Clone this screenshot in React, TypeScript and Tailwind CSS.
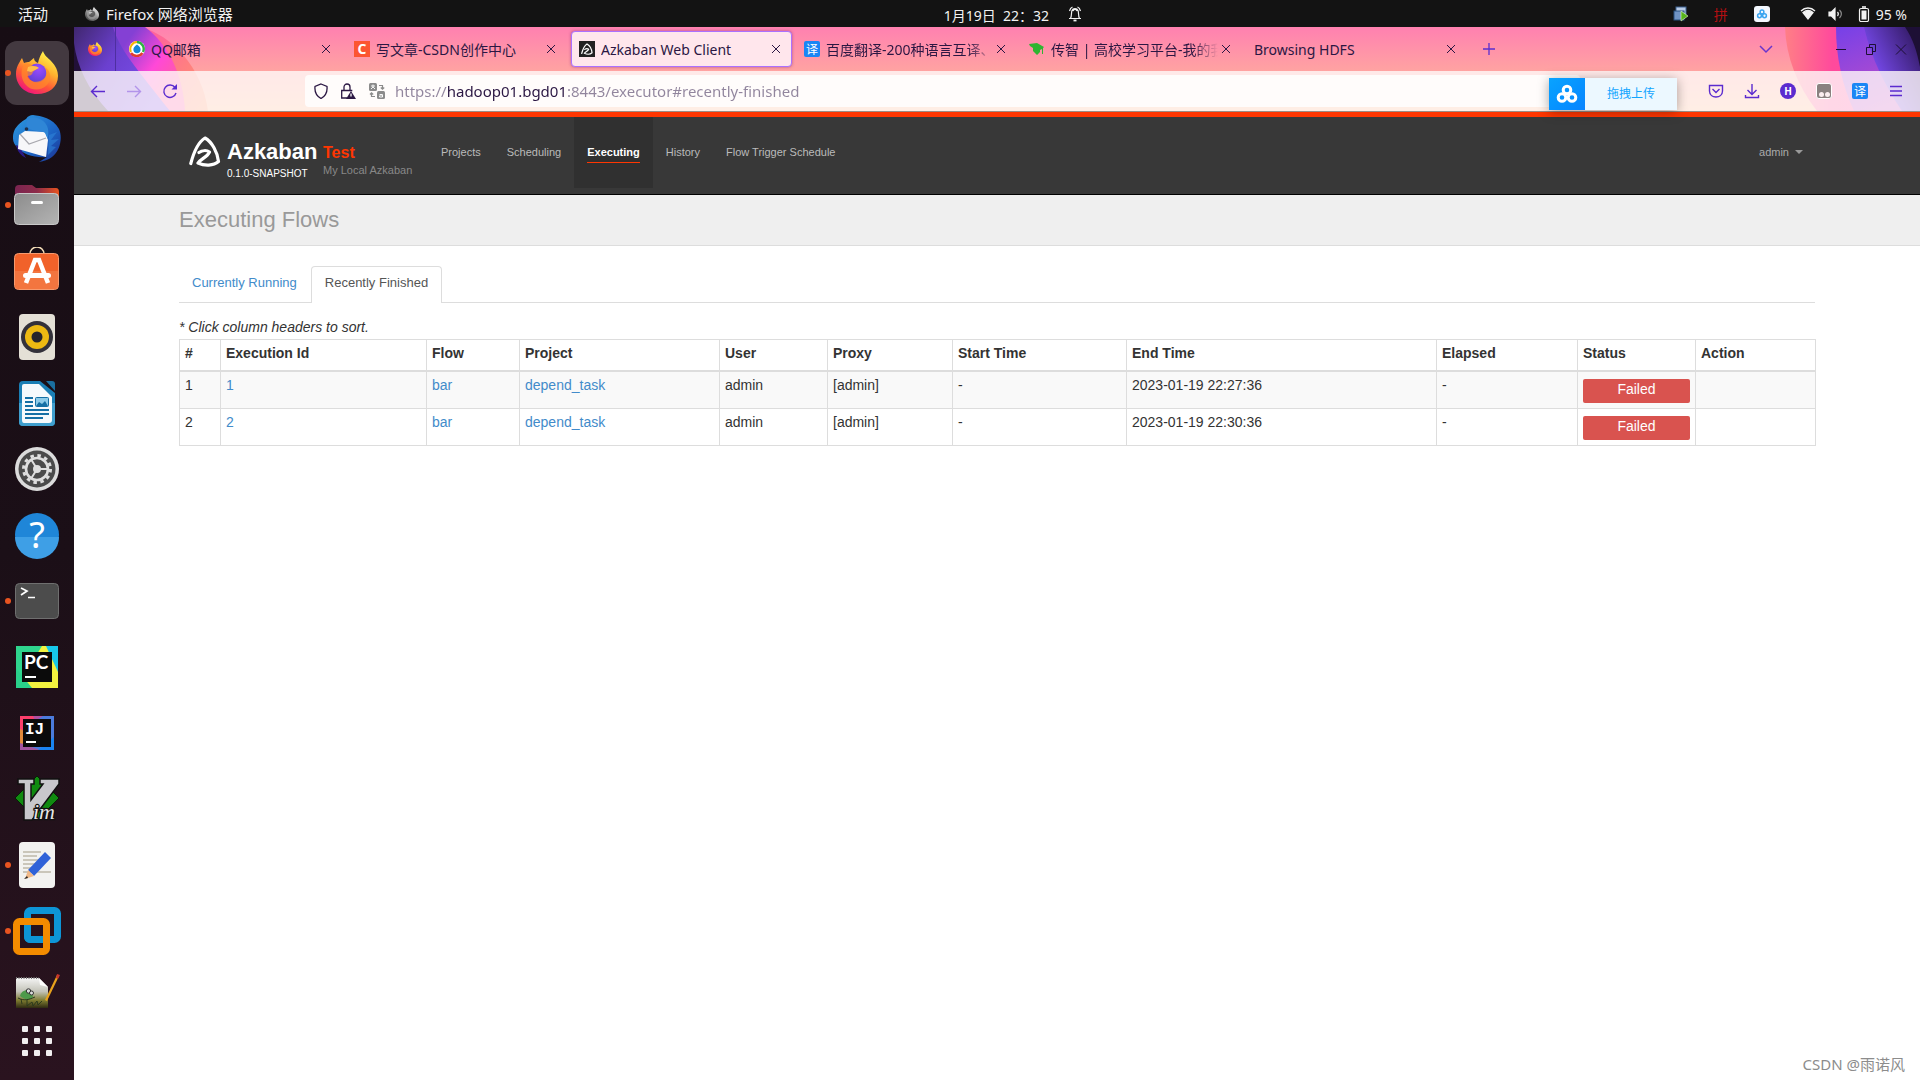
import { ReactNode } from "react";

type TabProps = {
  title: string;
  icon?: ReactNode;
  active?: boolean;
};

type Execution = {
  id: number;
  flow: string;
  project: string;
  user: string;
  proxy: string;
  start: string;
  end: string;
  elapsed: string;
  status: string;
};

const executions: Execution[] = [
  { id: 1, flow: "bar", project: "depend_task", user: "admin", proxy: "[admin]", start: "-", end: "2023-01-19 22:27:36", elapsed: "-", status: "Failed" },
  { id: 2, flow: "bar", project: "depend_task", user: "admin", proxy: "[admin]", start: "-", end: "2023-01-19 22:30:36", elapsed: "-", status: "Failed" },
];

const columns = [
  { name: "#", width: "w-[41px]" },
  { name: "Execution Id", width: "w-[206px]" },
  { name: "Flow", width: "w-[93px]" },
  { name: "Project", width: "w-[200px]" },
  { name: "User", width: "w-[108px]" },
  { name: "Proxy", width: "w-[125px]" },
  { name: "Start Time", width: "w-[174px]" },
  { name: "End Time", width: "w-[310px]" },
  { name: "Elapsed", width: "w-[141px]" },
  { name: "Status", width: "w-[118px]" },
  { name: "Action", width: "w-[120px]" },
];

const menu = ["Projects", "Scheduling", "Executing", "History", "Flow Trigger Schedule"];

/* ---------- small icons ---------- */

const FirefoxLogo = ({ className }: { className: string }) => (
  <svg viewBox="0 0 48 48" className={className}>
    <defs>
      <linearGradient id="fxBody" x1="0.8" y1="0.1" x2="0.3" y2="1">
        <stop offset="0" stopColor="#fff04a" />
        <stop offset="0.35" stopColor="#ffb02e" />
        <stop offset="0.65" stopColor="#ff5a36" />
        <stop offset="1" stopColor="#f0127f" />
      </linearGradient>
      <radialGradient id="fxCore" cx="0.6" cy="0.3" r="0.8">
        <stop offset="0" stopColor="#9a4bff" />
        <stop offset="1" stopColor="#5a3fd0" />
      </radialGradient>
    </defs>
    <path d="M30 2c1 4 5 7 8 10 5 5 7 10 7 15 0 11-9 18-21 18S3 36 3 25c0-7 3-11 6-16l2 5c2-1 4-1 5-1 2-1 3-3 5-4 0 3 2 4 4 5 1-5 3-9 5-12z" fill="url(#fxBody)" />
    <circle cx="24" cy="24" r="9.5" fill="url(#fxCore)" />
    <path d="M11 15c4-1 7 0 9 2 3 0 5 1 5 2-1 2-4 2-5 4-1 3-3 4-6 4 2 5 8 7 13 5 6-2 8-8 5-14 6 4 7 12 2 18-6 6-16 6-21 0-5-5-6-14-2-21z" fill="#ff8a2a" opacity="0.7" />
    <path d="M15 18c4-2 9-1 11 1-3 1-5 3-8 4l-4-1z" fill="#ffbd4a" />
  </svg>
);

const CloseIcon = () => (
  <svg viewBox="0 0 16 16" className="size-4" fill="none" stroke="#2b1743" strokeWidth="1">
    <path d="M4 4l8 8M12 4l-8 8" />
  </svg>
);

const QQMailIcon = () => (
  <svg viewBox="0 0 16 16" className="size-4">
    <circle cx="8" cy="8" r="8" fill="#fff" />
    <path d="M2 11A7 7 0 0 1 8 1" fill="none" stroke="#f7b500" strokeWidth="2" />
    <path d="M8 1a7 7 0 0 1 6 10" fill="none" stroke="#2fb344" strokeWidth="2.4" />
    <path d="M2 12a7 7 0 0 0 11.500 0" fill="none" stroke="#e33b2e" strokeWidth="2.4" />
    <path d="M8 3.500c3 2 4 4 3.500 6a3.600 3.600 0 0 1-7 0C4 7.500 5 5.500 8 3.500z" fill="#1486d8" />
  </svg>
);

const CsdnIcon = () => (
  <span className="flex size-4 items-center justify-center bg-[#fc5531] font-['Open_Sans',sans-serif] text-sm leading-4 font-bold text-white">C</span>
);

const TranslateBadge = () => (
  <span className="flex size-4 items-center justify-center rounded-xs bg-[#1a86f5] font-['Noto_Sans_CJK_SC',sans-serif] text-xs leading-4 text-white">译</span>
);

const SchoolIcon = () => (
  <svg viewBox="0 0 16 16" className="size-4" fill="#2fb531">
    <path d="M0 3l8-1 7 4-1 1v6h-1V8l-2 1v2l-3 3-4-4V7L1 5z" />
  </svg>
);

const AzkabanMark = ({ className }: { className: string }) => (
  <svg viewBox="0 0 32 31" className={className} fill="none" stroke="#fff" strokeWidth="3.2" strokeLinecap="round" strokeLinejoin="round">
    <path d="M1.800 27.500C4.500 17 9.500 6 16 2c7 4 12.500 14 13.500 23.500-5 4.500-14 4.500-20.500 1.500 2-3.500 9-5.500 11.500-11-3-2-7.500-1.500-10.500 0.500" />
  </svg>
);

const AzkabanFavicon = () => (
  <span className="flex size-4 items-center justify-center bg-[#222]">
    <AzkabanMark className="h-3 w-3" />
  </span>
);

const CloudIcon = ({ className, color }: { className: string; color: string }) => (
  <svg viewBox="0 0 24 20" className={className} fill="none" stroke={color} strokeWidth="3">
    <circle cx="12" cy="6" r="3.800" />
    <circle cx="7" cy="13.500" r="3.800" />
    <circle cx="17" cy="13.500" r="3.800" />
  </svg>
);

/* ---------- dock icons, 48x48 ---------- */

const ThunderbirdLogo = () => (
  <svg viewBox="0 0 48 48" className="size-12">
    <defs>
      <linearGradient id="tb" x1="0" y1="0" x2="1" y2="1">
        <stop offset="0" stopColor="#2d9be0" />
        <stop offset="0.6" stopColor="#1c63c4" />
        <stop offset="1" stopColor="#1d2f8e" />
      </linearGradient>
    </defs>
    <path d="M20 0c8 1 20 3 26 14 4 9 1 22-7 28-4 3-8 4-13 5l8-5C22 43 10 40 4 32-1 28-1 20 2 14 6 8 11 5 13 4c2-3 4-4 7-4z" fill="url(#tb)" />
    <path d="M3 30c1 6 5 11 10 13L6 31z" fill="#2a1a86" />
    <path d="M12 16l20 1 3 8-2 17L5 34 6 20z" fill="#f7f7f9" />
    <path d="M7 19l9 10 17-6" fill="none" stroke="#a8a8ae" strokeWidth="1.200" />
    <path d="M16 3c8-2 17 2 19 11 1 6-1 8 1 12l-4-8c-4-3-12-1-17-5-3-3-2-7 1-10z" fill="#2f86d6" />
    <path d="M36 20l8-3-6 8 8-1-8 7 5 1-8 8z" fill="#2f83d8" opacity="0.6" />
    <circle cx="13.500" cy="14" r="1.800" fill="#20304a" />
  </svg>
);

const FilesLogo = () => (
  <svg viewBox="0 0 48 48" className="size-12">
    <defs>
      <linearGradient id="flBack" x1="0" x2="1">
        <stop offset="0" stopColor="#7a2450" />
        <stop offset="0.5" stopColor="#8d2c4a" />
        <stop offset="1" stopColor="#e9541f" />
      </linearGradient>
      <linearGradient id="flFront" x1="0" y1="0" x2="1" y2="1">
        <stop offset="0" stopColor="#8c8c8c" />
        <stop offset="1" stopColor="#b4b4b4" />
      </linearGradient>
    </defs>
    <path d="M2 8q0-4 4-4h13l4 3h20q3 0 3 4v14H2z" fill="url(#flBack)" />
    <rect x="1.500" y="12.500" width="44" height="31" rx="4" fill="url(#flFront)" stroke="#c9c9c9" />
    <rect x="18" y="20" width="12" height="3" rx="1.500" fill="#fff" />
  </svg>
);

const SoftwareLogo = () => (
  <svg viewBox="0 0 48 48" className="size-12">
    <path d="M17 9V7a7 7 0 0 1 14 0v2" fill="none" stroke="#f2dcb8" strokeWidth="1.600" />
    <rect x="1.500" y="6.500" width="44" height="36" rx="4" fill="#f1622a" stroke="#f79a6e" />
    <path d="M2 24h43v14q0 4-4 4H6q-4 0-4-4z" fill="#f3753f" />
    <path d="M13 36L22 13h4l9 23" fill="none" stroke="#fff" strokeWidth="4.500" />
    <rect x="10" y="26" width="28" height="5" rx="2.500" fill="#fff" />
  </svg>
);

const RhythmboxLogo = () => (
  <svg viewBox="0 0 48 48" className="size-12">
    <rect x="6" y="1" width="36" height="46" rx="4" fill="#e4e0d6" />
    <circle cx="24" cy="24" r="16" fill="#33313a" />
    <circle cx="24" cy="24" r="12" fill="#edb912" />
    <circle cx="24" cy="24" r="5.500" fill="#26252b" />
  </svg>
);

const WriterLogo = () => (
  <svg viewBox="0 0 48 48" className="size-12">
    <path d="M10 2h17l15 12v29q0 4-4 4H10q-4 0-4-4V6q0-4 4-4z" fill="#1a7fb5" />
    <path d="M6 24h36v19q0 4-4 4H10q-4 0-4-4z" fill="#3f9fce" />
    <path d="M33 2h6q3 0 3 3v7z" fill="#1a6f9f" />
    <path d="M11 5h15l13 13v23q0 3-3 3H11q-2 0-2-3V7q0-2 2-2z" fill="#f5fafc" />
    <path d="M12 19h8M12 23h8M12 27h8M12 31h24M12 35h24M12 39h18" stroke="#1470a5" strokeWidth="2" />
    <rect x="22.500" y="18.500" width="13" height="9" rx="1" fill="#8ccbe8" stroke="#1470a5" />
    <path d="M23 27l3-4 3 2 3-3 3 5z" fill="#1470a5" />
  </svg>
);

const SettingsLogo = () => (
  <svg viewBox="0 0 48 48" className="size-12">
    <circle cx="24" cy="24" r="22" fill="#dcdcdc" />
    <circle cx="24" cy="24" r="18.500" fill="#4b4b4b" />
    <circle cx="24" cy="24" r="13.500" fill="none" stroke="#dedede" strokeWidth="3" strokeDasharray="3.500 3.568" />
    <circle cx="24" cy="24" r="11" fill="none" stroke="#dedede" strokeWidth="2.600" />
    <circle cx="24" cy="24" r="4" fill="#dedede" />
    <path d="M24 24h10M24 24l-5.500-9M24 24l-5.500 9" stroke="#dedede" strokeWidth="2" />
  </svg>
);

const HelpLogo = () => (
  <svg viewBox="0 0 48 48" className="size-12">
    <circle cx="24" cy="24" r="22" fill="#1f86d8" />
    <path d="M2 26h44a22 22 0 0 1-44 0z" fill="#3e9fe6" />
    <text x="24" y="37" textAnchor="middle" fontSize="36" fill="#fff" fontFamily="Noto Sans, sans-serif">?</text>
  </svg>
);

const TerminalLogo = () => (
  <svg viewBox="0 0 48 48" className="size-12">
    <rect x="2.500" y="6.500" width="43" height="35" rx="4" fill="#4c4c4c" stroke="#6f6f6f" />
    <path d="M8 11l6 3-6 4M15 20.500h7" fill="none" stroke="#fff" strokeWidth="1.700" />
  </svg>
);

const PyCharmLogo = () => (
  <svg viewBox="0 0 48 48" className="size-12">
    <rect x="3" y="3" width="42" height="42" fill="#2fd58e" />
    <path d="M31 3h14v28z" fill="#17c8ea" />
    <path d="M3 45l26-42h4l12 26v16z" fill="#f3f23f" />
    <path d="M3 45V25l16 20z" fill="#29d08a" />
    <rect x="9" y="9" width="30" height="30" fill="#0b0b0b" />
    <text x="11" y="26" fontSize="19" fontWeight="700" fill="#fff" fontFamily="Lato, sans-serif">PC</text>
    <rect x="12" y="33" width="11" height="2" fill="#fff" />
  </svg>
);

const IntellijLogo = () => (
  <svg viewBox="0 0 48 48" className="size-12">
    <rect x="7" y="7" width="34" height="34" fill="#4b7bdc" />
    <path d="M7 7h20L7 24z" fill="#fb3f6b" />
    <path d="M7 20l6 3v9l-6 5z" fill="#e08a3c" />
    <path d="M7 34l20 7H7z" fill="#a2559f" />
    <path d="M25 41h16V28z" fill="#1a84f0" />
    <path d="M20 7h10l-8 5z" fill="#b04fa0" />
    <rect x="10" y="10" width="28" height="28" fill="#0b0b0b" />
    <text x="12" y="25" fontSize="16" fontWeight="700" fill="#fff" fontFamily="Liberation Mono, monospace">IJ</text>
    <rect x="13" y="32" width="10" height="2" fill="#fff" />
  </svg>
);

const VimLogo = () => (
  <svg viewBox="0 0 48 48" className="size-12">
    <path d="M24 1l22 22-22 22L2 23z" fill="#108a10" stroke="#051f05" />
    <path d="M5 4h16v5h-3v16L30 9h-3V4h19v5L19 45h-8V9H5z" fill="#c8c8cc" stroke="#111" strokeWidth="1.500" />
    <text
      x="20"
      y="44"
      fontSize="22"
      fontStyle="italic"
      fill="#e6e6e8"
      stroke="#111"
      strokeWidth="2.500"
      paintOrder="stroke"
      fontFamily="Liberation Serif, serif"
    >
      im
    </text>
  </svg>
);

const TextEditorLogo = () => (
  <svg viewBox="0 0 48 48" className="size-12">
    <rect x="6" y="1" width="36" height="46" rx="4" fill="#f2f2f0" />
    <path d="M10 11h18M10 15h14M10 19h18M10 23h16M10 27h10M10 31h28" stroke="#bdb8a8" strokeWidth="1.600" />
    <path d="M32 11l6 6-17 18-6-6z" fill="#2f62d8" />
    <path d="M15 29l6 6-9 3z" fill="#f0b887" />
    <path d="M11 38l3-3 1 2z" fill="#222" />
  </svg>
);

const VmwareLogo = () => (
  <svg viewBox="0 0 48 48" className="size-12" fill="none" strokeWidth="7">
    <rect x="14.500" y="3.500" width="30" height="29" rx="3" stroke="#0d95d6" />
    <rect x="3.500" y="14.500" width="30" height="30" rx="3" stroke="#f38b00" />
    <path d="M14.500 20v9.500q0 3 3 3H28" stroke="#0d95d6" />
    <path d="M30 14.500H14" stroke="#f38b00" />
  </svg>
);

const NotepadLogo = () => (
  <svg viewBox="0 0 48 48" className="size-12">
    <defs>
      <linearGradient id="np" x1="0" y1="0" x2="0" y2="1">
        <stop offset="0" stopColor="#f4f4f4" />
        <stop offset="0.45" stopColor="#c3c3b8" />
        <stop offset="0.75" stopColor="#7d7b30" />
        <stop offset="1" stopColor="#2e2a12" />
      </linearGradient>
    </defs>
    <path d="M3 5h23l9 9v21H3z" fill="url(#np)" />
    <path d="M3 5h23" stroke="#777" strokeWidth="2" strokeDasharray="1 1.500" />
    <path d="M26 5l1 7 8 2z" fill="#fff" />
    <path d="M7 23c1-6 9-8 12-4l1 5c-4 4-8 3-13-1z" fill="#4e9a4a" />
    <circle cx="15.500" cy="18" r="2.200" fill="#ddd" stroke="#333" />
    <circle cx="18.500" cy="20" r="2" fill="#ddd" stroke="#333" />
    <path d="M5 25c6 3 10 2 17-1M8 26l1 5M14 27v6l5-4 1 4 4-5 1 4 4-4" stroke="#2c3a1c" fill="none" />
    <path d="M44 2l2 1-12 25-2-1z" fill="#e8a21c" />
    <path d="M44 1l3 1-2 4-2-1z" fill="#c8352a" />
  </svg>
);

const dockApps = [
  { name: "Firefox", icon: <FirefoxLogo className="size-12" />, running: true, active: true },
  { name: "Thunderbird", icon: <ThunderbirdLogo /> },
  { name: "Files", icon: <FilesLogo />, running: true },
  { name: "Ubuntu Software", icon: <SoftwareLogo /> },
  { name: "Rhythmbox", icon: <RhythmboxLogo /> },
  { name: "LibreOffice Writer", icon: <WriterLogo /> },
  { name: "Settings", icon: <SettingsLogo /> },
  { name: "Help", icon: <HelpLogo /> },
  { name: "Terminal", icon: <TerminalLogo />, running: true },
  { name: "PyCharm", icon: <PyCharmLogo /> },
  { name: "IntelliJ IDEA", icon: <IntellijLogo /> },
  { name: "Vim", icon: <VimLogo /> },
  { name: "Text Editor", icon: <TextEditorLogo />, running: true },
  { name: "VMware", icon: <VmwareLogo />, running: true },
];

const Dock = () => (
  <aside className="flex w-[74px] flex-none flex-col bg-linear-to-b from-[#170d14] via-[#1b0f17] to-[#2a131f] pt-[13px]">
    {dockApps.map((app) => (
      <div key={app.name} className="flex h-[66px] items-center">
        <span className="flex w-[5px] flex-none justify-end">
          {app.running && !app.active && <span className="-mr-1.5 size-1.5 flex-none rounded-full bg-[#e95420]" />}
        </span>
        <button
          aria-label={app.name}
          className={
            app.active
              ? "relative flex size-16 items-center justify-center rounded-xl bg-[#433940]"
              : "flex size-16 items-center justify-center"
          }
        >
          {app.active && <span className="absolute left-0 size-1.5 rounded-full bg-[#e95420]" />}
          {app.icon}
        </button>
      </div>
    ))}
    <button aria-label="Notepadqq" className="flex h-[46px] items-start justify-center overflow-hidden pt-[9px]">
      <NotepadLogo />
    </button>
    <button aria-label="Show Applications" className="grid h-[62px] grid-cols-[repeat(3,6px)] content-center justify-center gap-1.5">
      {Array.from({ length: 9 }).map((_, i) => (
        <span key={i} className="size-1.5 rounded-[1px] bg-[#f1eff0]" />
      ))}
    </button>
  </aside>
);

const TopBar = () => (
  <header className="flex h-[27px] flex-none items-center bg-[#131313] text-sm leading-5 text-[#f2f2f2]">
    <div className="flex w-[49%] items-center pl-[18px] text-[15px]">
      <button className="w-[66px] text-left">活动</button>
      <button className="flex items-center gap-1.5">
        <FirefoxLogo className="size-4 grayscale" />
        Firefox 网络浏览器
      </button>
    </div>
    <button className="flex items-center gap-[18px] pl-[3px]">
      <span className="pt-1 whitespace-pre">1月19日  22：32</span>
      <svg viewBox="0 0 16 16" className="size-4" fill="none" stroke="#f2f2f2" strokeWidth="1.200">
        <path d="M2 12.500h12M3.500 12.500C5 10 4 7 5 4.500 6 2 10 2 11 4.500c1 2.500 0 5.500 1.500 8M6 5C7 3 9 3 10 5M2.500 5C3 3 4 1.500 5.500 1M13.500 5C13 3 12 1.500 10.500 1" />
        <path d="M6.500 14.500h3" strokeWidth="1.800" />
      </svg>
    </button>
    <div className="ml-auto flex items-center pr-[13px]">
      <svg viewBox="0 0 16 16" className="mr-[25px] size-4">
        <rect x="3" y="1" width="10" height="8" fill="#b8cbe6" stroke="#3d618f" />
        <rect x="1" y="5" width="10" height="9" fill="#6f93c4" stroke="#29507f" />
        <path d="M8 5l7 5-7 5z" fill="#58b41c" stroke="#dff3cc" strokeWidth="0.600" />
      </svg>
      <span className="mr-6 w-4 font-['Noto_Sans_CJK_SC',sans-serif] text-sm text-[#b30f12]">拼</span>
      <span className="mr-[30px] flex size-4 items-center justify-center rounded-[3px] bg-[#f4f8ff]">
        <CloudIcon className="h-3 w-3" color="#3aa4f0" />
      </span>
      <svg viewBox="0 0 16 16" className="mr-3 size-4" fill="none" stroke="#f2f2f2" strokeWidth="1.300">
        <path d="M1 5c4-4 10-4 14 0" />
        <path d="M3 6.500c3-2.500 7-2.500 10 0L8 13z" fill="#f2f2f2" />
      </svg>
      <svg viewBox="0 0 16 16" className="mr-3 size-4" fill="none" stroke="#f2f2f2" strokeWidth="1.200">
        <path d="M1 6h2.500L7 2.500v11L3.500 10H1z" fill="#f2f2f2" />
        <path d="M9.500 6c1 1.200 1 2.800 0 4" />
        <path d="M11.500 4c2.500 2.400 2.500 5.600 0 8" stroke="#8a8a8a" />
      </svg>
      <svg viewBox="0 0 16 16" className="mr-1 size-4" fill="none" stroke="#f2f2f2" strokeWidth="1.200">
        <rect x="3.500" y="2.500" width="9" height="13" rx="1.500" />
        <path d="M6 1h4" strokeWidth="1.600" />
        <rect x="5.500" y="4.500" width="5" height="9" fill="#f2f2f2" stroke="none" />
      </svg>
      <span className="pt-0.5">95 %</span>
    </div>
  </header>
);

const BrowserTab = ({ title, icon, active }: TabProps) => (
  <div
    className={
      active
        ? "mx-0.5 flex h-9 w-[221px] flex-none items-center rounded-sm border border-[#ab71ff] bg-[#ffe6ec] px-[7px] shadow-[0_0_3px_rgba(120,40,120,0.6)]"
        : "mx-0.5 flex h-9 w-[221px] flex-none items-center px-2"
    }
  >
    <button className="flex min-w-0 flex-1 items-center gap-1.5 text-left">
      {icon && <span className="flex-none">{icon}</span>}
      <span
        className={
          title.length > 15 && title.includes("-")
            ? "flex-1 overflow-hidden mask-r-from-85% pt-px whitespace-nowrap"
            : "flex-1 overflow-hidden pt-px whitespace-nowrap"
        }
      >
        {title}
      </span>
    </button>
    <button aria-label={"Close " + title} className="flex-none">
      <CloseIcon />
    </button>
  </div>
);

const ThemeArt = () => (
  <>
    <svg viewBox="0 0 140 84" className="absolute top-0 left-0 h-[84px] w-[140px]">
      <defs>
        <linearGradient id="artL1" x1="0" y1="0" x2="1" y2="0.6">
          <stop offset="0" stopColor="#40276f" />
          <stop offset="0.45" stopColor="#6b40cf" />
          <stop offset="1" stopColor="#7c50ee" />
        </linearGradient>
        <linearGradient id="artL2" x1="0.2" y1="0.2" x2="0.8" y2="0.7">
          <stop offset="0" stopColor="#8440d4" />
          <stop offset="0.6" stopColor="#ff48d8" />
          <stop offset="1" stopColor="#ff5aa8" />
        </linearGradient>
        <linearGradient id="artL3" x1="0" y1="0" x2="1" y2="1">
          <stop offset="0" stopColor="#ff5aa5" />
          <stop offset="1" stopColor="#ff9a66" />
        </linearGradient>
      </defs>
      <path d="M66 0C98 8 128 40 134 84H90z" fill="url(#artL3)" />
      <path d="M36 0h35c24 18 38 48 40 84H80z" fill="url(#artL2)" />
      <path d="M0 0h39c6 22 24 42 57 84H0z" fill="url(#artL1)" />
      <path d="M0 16c3 24 14 46 34 68H0z" fill="#221038" />
    </svg>
    <svg viewBox="0 0 160 84" className="absolute top-0 right-0 h-[84px] w-[160px]">
      <defs>
        <linearGradient id="artR1" x1="0" y1="0" x2="0.7" y2="0">
          <stop offset="0" stopColor="#ff7f86" />
          <stop offset="0.5" stopColor="#ff4a9c" />
          <stop offset="1" stopColor="#ff48a2" />
        </linearGradient>
        <linearGradient id="artR2" x1="0" y1="0" x2="0.4" y2="1">
          <stop offset="0" stopColor="#7540e8" />
          <stop offset="1" stopColor="#c04fc8" />
        </linearGradient>
        <linearGradient id="artR3" x1="1" y1="0" x2="0.2" y2="0.6">
          <stop offset="0" stopColor="#2a1452" />
          <stop offset="1" stopColor="#7a4cf2" />
        </linearGradient>
      </defs>
      <path d="M25 0c1 30 12 58 32 84h103V0z" fill="url(#artR1)" />
      <path d="M76 0c0 30 6 58 18 84h66V0z" fill="url(#artR2)" />
      <path d="M104 0c8 34 22 60 38 84h18V0z" fill="url(#artR3)" />
      <path d="M145 0c8 12 12 24 15 40V0z" fill="#1d0f35" />
    </svg>
  </>
);

const BrowserChrome = () => (
  <div className="relative flex-none bg-linear-to-b from-[#ff80b0] to-[#ffc090] text-sm leading-5 text-[#2b1743]">
    <ThemeArt />
    <div className="relative flex h-11 items-center">
      <button aria-label="Firefox View" className="mr-[3px] flex h-full w-[42px] items-center justify-center border-r border-[#4e2fa0]">
        <FirefoxLogo className="size-4" />
      </button>
      <BrowserTab title="QQ邮箱" icon={<QQMailIcon />} />
      <BrowserTab title="写文章-CSDN创作中心" icon={<CsdnIcon />} />
      <BrowserTab title="Azkaban Web Client" icon={<AzkabanFavicon />} active />
      <BrowserTab title="百度翻译-200种语言互译、沟通" icon={<TranslateBadge />} />
      <BrowserTab title="传智 | 高校学习平台-我的我的" icon={<SchoolIcon />} />
      <BrowserTab title="Browsing HDFS" />
      <button aria-label="New tab" className="ml-3">
        <svg viewBox="0 0 16 16" className="size-4" stroke="#5b2fd0" strokeWidth="1.300">
          <path d="M8 2v12M2 8h12" />
        </svg>
      </button>
      <div className="ml-auto flex items-center pr-[11px]">
        <button aria-label="List tabs" className="mr-[59px]">
          <svg viewBox="0 0 16 16" className="size-4" fill="none" stroke="#6a35cc" strokeWidth="1.500">
            <path d="M2 5l6 6 6-6" />
          </svg>
        </button>
        <button aria-label="Minimize" className="mr-3.5">
          <svg viewBox="0 0 16 16" className="size-4" stroke="#1d0f35"><path d="M3 8.500h10" /></svg>
        </button>
        <button aria-label="Restore" className="mr-3.5">
          <svg viewBox="0 0 16 16" className="size-4" fill="none" stroke="#1d0f35"><path d="M3.500 6.500h6v7h-6zM6.500 6V3.500h6v7h-3" /></svg>
        </button>
        <button aria-label="Close window">
          <svg viewBox="0 0 16 16" className="size-4" stroke="#1d0f35"><path d="M3 3.500l10 10M13 3.500l-10 10" /></svg>
        </button>
      </div>
    </div>

    <div className="relative flex h-10 items-center bg-[#fffafa]/80 pr-4 pl-4">
      <button aria-label="Back" className="mr-5">
        <svg viewBox="0 0 16 16" className="size-4" fill="none" stroke="#5b2bcf" strokeWidth="1.400"><path d="M15 8.500H1.500M7 3L1.500 8.500 7 14" /></svg>
      </button>
      <button aria-label="Forward" className="mr-5">
        <svg viewBox="0 0 16 16" className="size-4" fill="none" stroke="#b294ea" strokeWidth="1.400"><path d="M1 8.500h13.500M9 3l5.500 5.500L9 14" /></svg>
      </button>
      <button aria-label="Reload">
        <svg viewBox="0 0 16 16" className="size-4" fill="none" stroke="#5b2bcf" strokeWidth="1.400">
          <path d="M13 4.500A6.200 6.200 0 1 0 14 10" />
          <path d="M15 1v5.500H9.500z" fill="#5b2bcf" stroke="none" />
        </svg>
      </button>
      <div className="ml-[127px] flex h-8 flex-1 items-center rounded-sm bg-[#fffcfb] pl-2">
        <svg viewBox="0 0 16 16" className="mr-[11px] size-4" fill="none" stroke="#2b1743" strokeWidth="1.300">
          <path d="M8 1l6 2.500c.5 5-1.500 9.500-6 12-4.500-2.500-6.500-7-6-12z" />
        </svg>
        <svg viewBox="0 0 16 16" className="mr-[13px] size-4" fill="none" stroke="#2b1743" strokeWidth="1.300">
          <path d="M7 15H1.700V7.500h10.600M4 7.500V4a3 3 0 0 1 6 0v3.500" />
          <path d="M11 8l5 8H6z" fill="#2b1743" stroke="none" />
          <path d="M11 10.500v3" stroke="#fff" />
        </svg>
        <svg viewBox="0 0 16 16" className="mr-2.5 size-4" fill="none" stroke="#8b8b8b" strokeWidth="1.200">
          <rect x="0" y="0" width="8" height="8" rx="1.500" fill="#8b8b8b" stroke="none" />
          <rect x="8" y="8" width="8" height="8" rx="1.500" fill="#8b8b8b" stroke="none" />
          <path d="M2 3h4M4 1.500V4L2 6M4 4l2 2M10.500 14c0-3 3-3 3 0M10.500 14h3v-2.500h-3" stroke="#fff" strokeWidth="0.900" />
          <path d="M10 2.500h3.500V6M11.800 4.500l1.700 1.700 1.700-1.700M2.500 10v3.500H6M1 11.500l1.500-1.700 1.700 1.700" />
        </svg>
        <input
          type="text"
          aria-label="Address"
          defaultValue="https://hadoop01.bgd01:8443/executor#recently-finished"
          className="min-w-0 flex-1 bg-[linear-gradient(90deg,#91859d_52px,#2b1743_52px,#2b1743_172px,#91859d_172px)] bg-clip-text text-[15px] text-transparent outline-none"
        />
      </div>
      <div className="ml-[128px] flex items-center gap-5">
        <button aria-label="Save to Pocket">
          <svg viewBox="0 0 16 16" className="size-4" fill="none" stroke="#5b2bcf" strokeWidth="1.400">
            <path d="M1.500 2.500h13V8c0 8-13 8-13 0z" />
            <path d="M4.500 6L8 9.500 11.500 6" />
          </svg>
        </button>
        <button aria-label="Downloads">
          <svg viewBox="0 0 16 16" className="size-4" fill="none" stroke="#5b2bcf" strokeWidth="1.400">
            <path d="M8 1v10M3.500 7L8 11.500 12.500 7M1.500 12v2.500h13V12" />
          </svg>
        </button>
        <button aria-label="Account" className="size-4 rounded-full bg-[#5b2bcf] text-[10px] leading-4 font-bold text-white">H</button>
        <button aria-label="Tampermonkey" className="flex size-4 items-end justify-center gap-px rounded-[3px] border border-white bg-[#8a8180] pb-px">
          <span className="size-[5px] rounded-full bg-[#fbeef0]" />
          <span className="size-[5px] rounded-full bg-[#fbeef0]" />
        </button>
        <button aria-label="Translate"><TranslateBadge /></button>
        <button aria-label="Menu">
          <svg viewBox="0 0 16 16" className="size-4" stroke="#5b2bcf" strokeWidth="1.400"><path d="M2 3.500h12M2 8h12M2 12.500h12" /></svg>
        </button>
      </div>
      {/* upload drop target floats over the toolbar */}
      <button className="absolute top-[7px] right-[243px] z-10 flex h-8 w-32 items-stretch bg-[#ecf8ff] text-xs leading-8 text-[#12a5ff] shadow-[0_2px_12px_rgba(0,0,0,0.35)]">
        <span className="flex w-9 items-center justify-center bg-linear-to-br from-[#0aa3ff] to-[#0a84ff]">
          <CloudIcon className="h-5 w-6" color="#fff" />
        </span>
        <span className="flex-1">拖拽上传</span>
      </button>
    </div>
    <div className="relative h-px bg-[#9a8c86]" />
  </div>
);

const AzkabanHeader = () => (
  <div className="flex h-[83px] flex-none items-start border-t-[5px] border-b border-t-[#ff3601] border-b-black bg-[#383838] px-[105px] text-[11px] leading-[14px]">
    <a href="#" className="flex w-[249px] items-start pl-[10px] text-white">
      <AzkabanMark className="mt-[19px] h-[31px] w-8" />
      <span className="mt-[23px] ml-[6px] w-24">
        <span className="block text-[22px] leading-6 font-bold">Azkaban</span>
        <span className="mt-[3px] block text-[10px]">0.1.0-SNAPSHOT</span>
      </span>
      <span className="mt-[26px] whitespace-nowrap">
        <span className="block text-base leading-5 font-bold text-[#ff3601]">Test</span>
        <span className="block text-[#888]">My Local Azkaban</span>
      </span>
    </a>
    <nav className="flex">
      {menu.map((item) => (
        <a
          key={item}
          href="#"
          className={
            item === "Executing"
              ? "h-[71px] bg-[#303030] px-[13px] pt-7 font-bold text-white"
              : "h-[71px] px-[13px] pt-7 text-[#bbb]"
          }
        >
          <span className={item === "Executing" ? "block border-b border-[#ff3601] pb-[3px]" : "block"}>{item}</span>
        </a>
      ))}
    </nav>
    <button className="mt-7 ml-auto flex items-center gap-1.5 pr-3 text-[#aaa]">
      admin
      <span className="border-x-4 border-t-4 border-x-transparent border-t-[#999]" />
    </button>
  </div>
);

const ExecutionTable = () => (
  <table className="w-full table-fixed border-collapse border border-[#ddd] text-left text-sm leading-5 text-[#333]">
    <thead>
      <tr>
        {columns.map((col) => (
          <th key={col.name} className={`${col.width} border border-b-2 border-[#ddd] px-[5px] pt-[3px] pb-[7px] font-bold`}>
            {col.name}
          </th>
        ))}
      </tr>
    </thead>
    <tbody className="[&_td]:border [&_td]:border-[#ddd] [&_td]:px-[5px] [&_td]:pt-[3px] [&_td]:align-top">
      {executions.map((row, i) => (
        <tr key={row.id} className="odd:bg-[#f9f9f9]">
          <td>{i + 1}</td>
          <td><a href="#" className="text-[#428bca]">{row.id}</a></td>
          <td><a href="#" className="text-[#428bca]">{row.flow}</a></td>
          <td><a href="#" className="text-[#428bca]">{row.project}</a></td>
          <td>{row.user}</td>
          <td>{row.proxy}</td>
          <td>{row.start}</td>
          <td>{row.end}</td>
          <td>{row.elapsed}</td>
          <td>
            <div className="mt-1 mb-[5px] h-6 rounded-xs bg-[#d9534f] text-center text-white">{row.status}</div>
          </td>
          <td></td>
        </tr>
      ))}
    </tbody>
  </table>
);

const App = () => {
  return (
    <div className="flex min-h-screen flex-col bg-white font-['Noto_Sans','Noto_Sans_CJK_SC',sans-serif]">
      <TopBar />
      <div className="flex flex-1">
        <Dock />
        <div className="flex min-w-0 flex-1 flex-col">
          <BrowserChrome />
          <main className="flex-1 font-['Liberation_Sans',Arial,sans-serif]">
            <AzkabanHeader />
            <div className="border-b border-[#ddd] bg-[#efefef] px-[105px] py-[13px]">
              <h1 className="text-[22px] leading-6 text-[#999]">Executing Flows</h1>
            </div>
            <div className="px-[105px] pt-5">
              <div className="flex border-b border-[#ddd] text-[13px] leading-[18px]">
                <a href="#" className="mr-px px-[13px] pt-2 pb-2.5 text-[#428bca]">Currently Running</a>
                <a href="#" className="-mb-px rounded-t-sm border border-b-0 border-[#ddd] bg-white px-[13px] pt-[7px] pb-[11px] text-[#555]">
                  Recently Finished
                </a>
              </div>
              <p className="mt-[13px] mb-px text-sm leading-[22px] text-[#333] italic">* Click column headers to sort.</p>
              <ExecutionTable />
            </div>
          </main>
        </div>
      </div>
      <div className="absolute right-[15px] bottom-1.5 text-[15px] leading-5 text-[#8c8c8c]">CSDN @雨诺风</div>
    </div>
  );
};

export default App;
